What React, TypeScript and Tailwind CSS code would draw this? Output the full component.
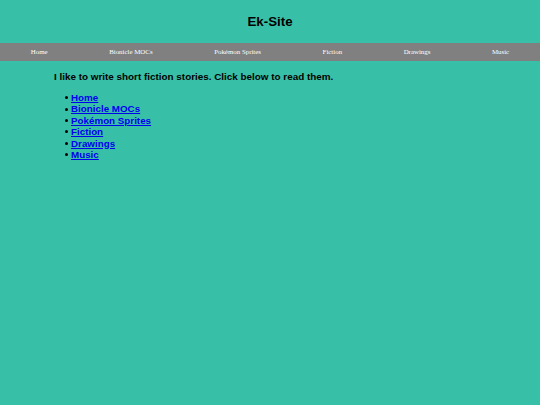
const LINKS = ['Home', 'Bionicle MOCs', 'Pokémon Sprites', 'Fiction', 'Drawings', 'Music']

export default function App() {
  return (
    <div className="min-h-[405px] bg-[#38bfa7] font-['Liberation_Sans',Arial,sans-serif] text-black">
      {/* Title */}
      <h1 className="pt-[12px] pb-[11px] text-center text-[13.3px] font-bold leading-[20px]">Ek-Site</h1>

      {/* Nav bar */}
      <nav className="flex h-[18px] items-center justify-around bg-[#808080] font-['Liberation_Serif','Times_New_Roman',serif] text-[6.9px] text-white">
        {LINKS.map((l) => (
          <a key={l}>{l}</a>
        ))}
      </nav>

      {/* Content */}
      <div className="px-[54px] pt-[9px]">
        <p className="text-[9.9px] font-bold leading-[14px]">
          I like to write short fiction stories. Click below to read them.
        </p>
        <ul className="mt-[8px] pl-[11px] text-[9.8px] font-bold leading-[11.4px]">
          {LINKS.map((l) => (
            <li key={l} className="flex items-center">
              <span className="mr-[3px] h-[3px] w-[3px] rounded-full bg-black" />
              <a href="#" className="text-[#0000ee] underline">
                {l}
              </a>
            </li>
          ))}
        </ul>
      </div>
    </div>
  )
}
